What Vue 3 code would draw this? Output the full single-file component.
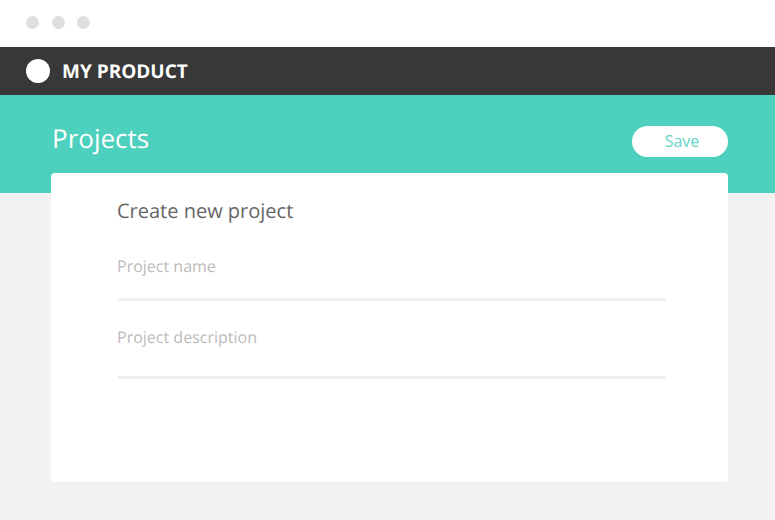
<script setup>
const fields = ["Project name", "Project description"];
</script>

<template>
  <div class="page">
    <div class="chrome">
      <span class="dot"></span>
      <span class="dot"></span>
      <span class="dot"></span>
    </div>
    <div class="topbar">
      <span class="logo"></span>
      <span class="brand">MY PRODUCT</span>
    </div>
    <div class="hero">
      <h1>Projects</h1>
      <button class="save">Save</button>
    </div>
    <div class="content">
      <div class="card">
        <h2>Create new project</h2>
        <div v-for="(f, i) in fields" :key="f" class="field" :class="'field-' + i">{{ f }}</div>
      </div>
    </div>
  </div>
</template>

<style scoped>
.page {
  width: 775px;
  height: 520px;
  background: #f2f2f2;
  font-family: "Open Sans", sans-serif;
  text-rendering: geometricPrecision;
  overflow: hidden;
}

.chrome {
  height: 47px;
  background: #fff;
  display: flex;
  align-items: center;
  gap: 12.5px;
  padding: 0 0 2px 26px;
  box-sizing: border-box;
}

.dot {
  width: 13px;
  height: 13px;
  border-radius: 50%;
  background: #dfdfdf;
}

.topbar {
  height: 48px;
  background: #383838;
  display: flex;
  align-items: center;
  padding-left: 26px;
}

.logo {
  width: 24px;
  height: 24px;
  border-radius: 50%;
  background: #fff;
  margin-right: 12px;
}

.brand {
  color: #fff;
  font-size: 19px;
  font-weight: 700;
}

.hero {
  height: 98px;
  background: #4dd0bd;
  display: flex;
  justify-content: space-between;
  align-items: flex-start;
  padding: 0 47px 0 52px;
}

h1 {
  margin: 25px 0 0;
  font-size: 26px;
  font-weight: 400;
  line-height: 37px;
  color: #fff;
}

.save {
  margin-top: 31px;
  width: 96px;
  height: 31px;
  border: none;
  border-radius: 16px;
  background: #fff;
  color: #5fd5c4;
  font-family: inherit;
  font-size: 16px;
  padding: 0 0 2px 4px;
}

.content {
  padding: 0 47px 0 51px;
  margin-top: -20px;
}

.card {
  height: 309px;
  background: #fff;
  border-radius: 4px;
  padding: 24px 62px 0 66px;
  box-sizing: border-box;
}

h2 {
  margin: 0;
  font-size: 20px;
  font-weight: 400;
  line-height: 28px;
  color: #666;
}

.field {
  color: #bbb;
  font-size: 16px;
  line-height: 22px;
  border-bottom: 3px solid #f0f0f0;
}

.field-0 {
  margin-top: 30px;
  padding-bottom: 21px;
}

.field-1 {
  margin-top: 25px;
  padding-bottom: 28px;
}
</style>
